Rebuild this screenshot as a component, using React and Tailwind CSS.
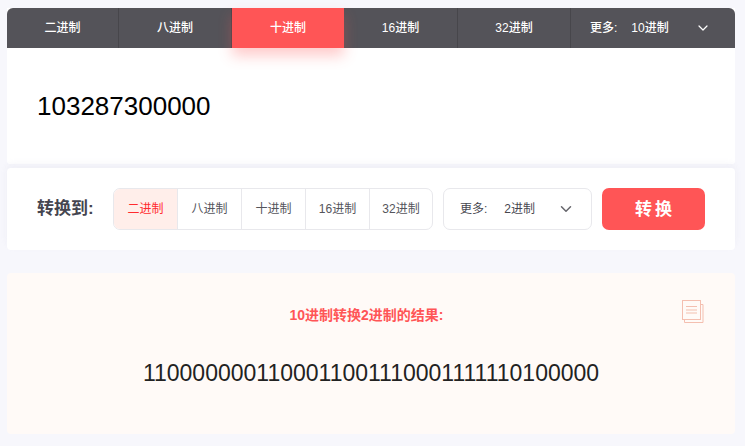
import React from "react";
import { ChevronDown } from "lucide-react";

const FONT = "font-['Arial','Liberation_Sans','Noto_Sans_CJK_SC',sans-serif]";

const topTabs = [
  { label: "二进制", width: "w-[112px]" },
  { label: "八进制", width: "w-[113px]" },
  { label: "十进制", width: "w-[112px]", active: true },
  { label: "16进制", width: "w-[114px]" },
  { label: "32进制", width: "w-[113px]" },
];

const targets = ["二进制", "八进制", "十进制", "16进制", "32进制"];

const CopyIcon = () => (
  <svg width="22" height="24" viewBox="0 0 22 24" fill="none" stroke="#f4bfb0" strokeWidth="1">
    <path d="M2.500 19.500v3h18.500v-18h-2.500" />
    <rect x="0.500" y="0.500" width="18" height="19" fill="#fffaf7" />
    <path d="M4 6.500h11M4 10h11M4 13h11" strokeWidth="1.200" />
  </svg>
);

export default function App() {
  return (
    <div className={`${FONT} w-[745px] h-[446px] overflow-hidden bg-[#f7f7fc] pt-2 pl-[7px] pr-[10px]`}>
      {/* input card */}
      <div className="bg-white rounded-b-[3px]">
        <div className="flex h-10 bg-[#545359] rounded-t-[6px] text-white text-xs font-medium">
          {topTabs.map((tab) => (
            <div
              key={tab.label}
              className={`${tab.width} flex items-center justify-center ${
                tab.active
                  ? "bg-[#ff5556] shadow-[0_8px_14px_rgba(255,85,86,0.3)] relative"
                  : "border-r border-[#47464b]"
              }`}
            >
              {tab.label}
            </div>
          ))}
          <div className="flex-1 flex items-center pl-[19px] pr-[24px]">
            <span>更多:</span>
            <span className="ml-[14px]">10进制</span>
            <ChevronDown className="ml-auto w-4 h-4" strokeWidth={1.800} />
          </div>
        </div>
        <div className="h-[116px] pl-[30px] pt-[42px] text-[26px] leading-[32px] text-black">103287300000</div>
      </div>

      {/* target selector */}
      <div className="mt-1 h-[82px] bg-white rounded-[4px] flex items-center pl-[30px] shadow-[0_-4px_6px_rgba(230,230,240,0.4)]">
        <div className="w-[76px] text-[17px] font-bold text-[#45454f]">转换到:</div>
        <div className="flex h-[42px] w-[320px] rounded-[7px] border border-[#e8e8ec] overflow-hidden text-xs text-[#55555c]">
          {targets.map((t, i) => (
            <div
              key={t}
              className={`${i < 4 ? "w-[64px] border-r border-[#e8e8ec]" : "flex-1"} flex items-center justify-center ${
                i === 0 ? "bg-[#ffeeea] text-[#ff2a2e]" : ""
              }`}
            >
              {t}
            </div>
          ))}
        </div>
        <div className="ml-[10px] h-[42px] w-[149px] rounded-[7px] border border-[#e8e8ec] flex items-center pl-4 pr-4 text-xs text-[#47474f]">
          <span>更多:</span>
          <span className="ml-[17px]">2进制</span>
          <ChevronDown className="ml-auto w-[18px] h-[18px] text-[#66666c]" strokeWidth={2} />
        </div>
        <button className="ml-[10px] h-[42px] w-[103px] rounded-[7px] bg-[#ff5556] text-white text-[17px] font-bold tracking-[3px] pl-[3px] pt-px">
          转换
        </button>
      </div>

      {/* result */}
      <div className="relative mt-[23px] h-[161px] bg-[#fffaf7] rounded-[4px] flex flex-col items-center">
        <div className="mt-[33px] mr-[9px] text-[14px] leading-[18px] font-bold text-[#ff5556]">10进制转换2进制的结果:</div>
        <div className="mt-[34px] text-[23px] leading-[30px] text-[#222]">1100000001100011001110001111110100000</div>
        <div className="absolute top-[27px] right-[31px]">
          <CopyIcon />
        </div>
      </div>
    </div>
  );
}
